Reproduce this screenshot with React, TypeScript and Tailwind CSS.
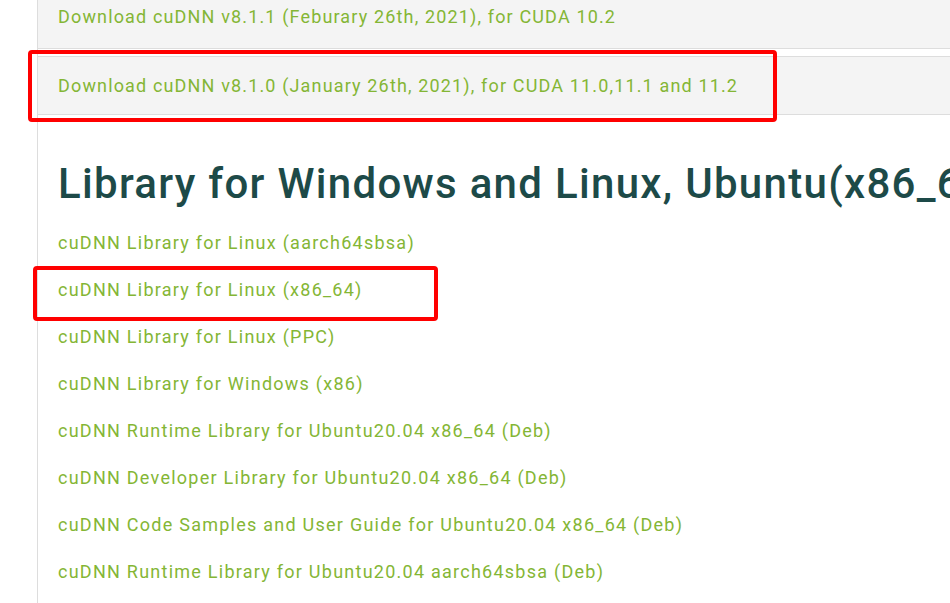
import React from "react";

const items = [
  "cuDNN Library for Linux (aarch64sbsa)",
  "cuDNN Library for Linux (x86_64)",
  "cuDNN Library for Linux (PPC)",
  "cuDNN Library for Windows (x86)",
  "cuDNN Runtime Library for Ubuntu20.04 x86_64 (Deb)",
  "cuDNN Developer Library for Ubuntu20.04 x86_64 (Deb)",
  "cuDNN Code Samples and User Guide for Ubuntu20.04 x86_64 (Deb)",
  "cuDNN Runtime Library for Ubuntu20.04 aarch64sbsa (Deb)",
];

export default function App() {
  const font = { fontFamily: "Roboto, 'Liberation Sans', sans-serif" };
  return (
    <div className="relative w-[950px] h-[603px] overflow-hidden bg-white" style={font}>
      <div className="flex h-full">
        <div className="w-[37px] shrink-0" />
        <div className="flex-1 border-l border-[#dddddd] min-w-0 overflow-hidden">
          <div className="bg-[#f4f4f4] border-b border-[#dddddd] pt-[5px] pb-[19px] pl-[20px]">
            <span className="block text-[18px] leading-[24px] tracking-[1.15px] text-[#84b635] whitespace-nowrap">
              Download cuDNN v8.1.1 (Feburary 26th, 2021), for CUDA 10.2
            </span>
          </div>
          <div className="mt-[7px] bg-[#f4f4f4] border-y border-[#dddddd] h-[59px] flex items-center pl-[20px]">
            <span className="block text-[18px] leading-[24px] tracking-[1.15px] text-[#84b635] whitespace-nowrap">
              Download cuDNN v8.1.0 (January 26th, 2021), for CUDA 11.0,11.1 and 11.2
            </span>
          </div>
          <h2 className="mt-[44px] pl-[20px] text-[42px] leading-[50px] font-medium tracking-[1.3px] text-[#1d4a48] whitespace-nowrap">
            Library for Windows and Linux, Ubuntu(x86_64
          </h2>
          <ul className="mt-[10px] pl-[20px]">
            {items.map((t) => (
              <li key={t} className="h-[47px] flex items-center text-[18px] tracking-[1.25px] text-[#84b635] whitespace-nowrap">
                {t}
              </li>
            ))}
          </ul>
        </div>
      </div>
      <div className="absolute left-[28px] top-[50px] w-[749px] h-[72px] border-[4px] border-[#ff0000] rounded-[4px]" />
      <div className="absolute left-[33px] top-[266px] w-[405px] h-[55px] border-[4px] border-[#ff0000] rounded-[4px]" />
    </div>
  );
}
